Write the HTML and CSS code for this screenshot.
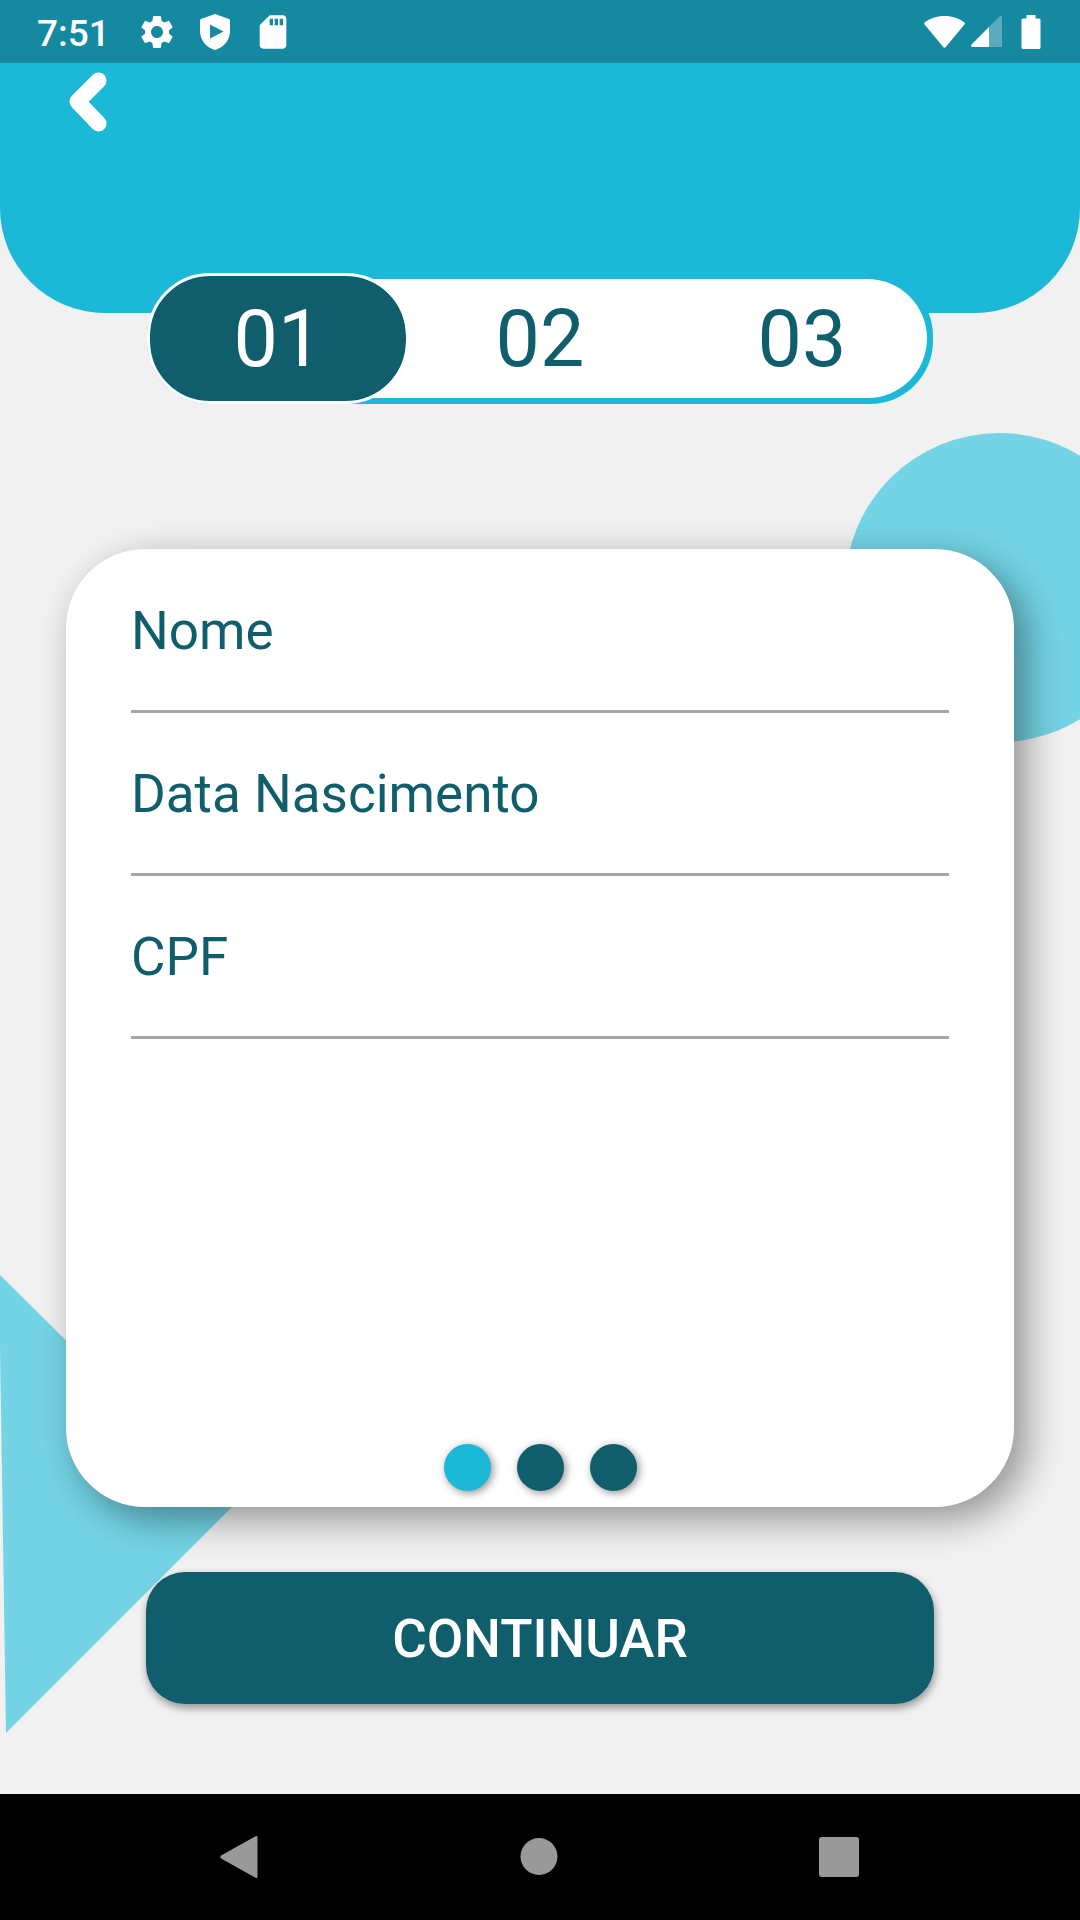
FILE: index.html
```html
<!DOCTYPE html>
<html lang="pt-BR">
<head>
<meta charset="utf-8">
<meta name="viewport" content="width=device-width, initial-scale=1">
<title>Cadastro</title>
<link rel="stylesheet" href="styles.css">
</head>
<body>
<div class="screen">
  <div class="status-bar">
    <span class="clock">7:51</span>
    <div class="notifications">
      <svg class="status-icon" viewBox="0 0 24 24" aria-hidden="true"><path d="M19.14 12.94c.04-.3.06-.61.06-.94 0-.32-.02-.64-.07-.94l2.03-1.58c.18-.14.23-.41.12-.61l-1.92-3.32c-.12-.22-.37-.29-.59-.22l-2.39.96c-.5-.38-1.03-.7-1.62-.94L14.4 2.81c-.04-.24-.24-.41-.48-.41h-3.84c-.24 0-.43.17-.47.41L9.25 5.35c-.59.24-1.13.57-1.62.94l-2.39-.96c-.22-.08-.47 0-.59.22L2.74 8.87c-.12.21-.08.47.12.61l2.03 1.58c-.05.3-.09.63-.09.94s.02.64.07.94l-2.03 1.58c-.18.14-.23.41-.12.61l1.92 3.32c.12.22.37.29.59.22l2.39-.96c.5.38 1.03.7 1.62.94l.36 2.54c.05.24.24.41.48.41h3.84c.24 0 .44-.17.47-.41l.36-2.54c.59-.24 1.13-.56 1.62-.94l2.39.96c.22.08.47 0 .59-.22l1.92-3.32c.12-.22.07-.47-.12-.61l-2.01-1.58zM12 15.6c-1.98 0-3.6-1.62-3.6-3.6s1.62-3.6 3.6-3.6 3.6 1.62 3.6 3.6-1.62 3.6-3.6 3.6z"/></svg>
      <svg class="status-icon" viewBox="0 0 40 40" aria-hidden="true"><path fill-rule="evenodd" d="M20 2 34 7Q35 7.500 35 8.500V19C35 28 29 35.500 20 38 11 35.500 5 28 5 19V8.500Q5 7.500 6 7ZM15 12.500V26.500L28.500 19.500Z"/></svg>
      <svg class="status-icon" viewBox="0 0 24 24" aria-hidden="true"><path d="M18 2h-8L4 8v12c0 1.100.9 2 2 2h12c1.100 0 2-.9 2-2V4c0-1.100-.9-2-2-2zm-6 6h-2V4h2v4zm3 0h-2V4h2v4zm3 0h-2V4h2v4z"/></svg>
    </div>
    <div class="indicators">
      <svg class="wifi-icon" viewBox="0 0 41 32" aria-hidden="true"><path d="M20.500 0C28.500 0 35.500 2.500 40.200 6.300Q41.200 7.300 40.400 8.600L22 30.800Q20.500 32.500 19 30.800L.6 8.600Q-.2 7.300.8 6.300C5.500 2.500 12.500 0 20.500 0Z"/></svg>
      <svg class="signal-icon" viewBox="0 0 31 31" aria-hidden="true"><path opacity=".3" d="M18 11 28.500.6Q31-.8 31 1.500V29.500Q31 31 29.500 31H18Z"/><path d="M18 11V31H1.500Q-.8 31 .5 28.500Z"/></svg>
      <svg class="battery-icon" viewBox="0 0 20 34" aria-hidden="true"><path d="M5.500 0h9v3.500H18q1.500 0 1.500 1.500v27.500q0 1.500-1.500 1.500H2Q.5 34 .5 32.500V5q0-1.500 1.500-1.500h3.500Z"/></svg>
    </div>
  </div>

  <header class="header">
    <button class="back" type="button" aria-label="Voltar">
      <svg class="back-icon" viewBox="0 0 38 60" aria-hidden="true"><path d="M29.500 8.500 8.500 29.500 29.500 51.500"/></svg>
    </button>
  </header>

  <main class="content">
    <div class="decor-circle"></div>
    <svg class="decor-triangle" viewBox="0 0 233 458" aria-hidden="true"><path d="M0 0 233 231 6 458 0 71Z"/></svg>

    <ol class="steps">
      <li class="step step-active" aria-current="step">01</li>
      <li class="step">02</li>
      <li class="step">03</li>
    </ol>

    <form class="form">
      <section class="card">
        <div class="field">
          <label class="field-label" for="nome">Nome</label>
          <input class="field-input" id="nome" type="text">
        </div>
        <div class="field">
          <label class="field-label" for="nascimento">Data Nascimento</label>
          <input class="field-input" id="nascimento" type="text">
        </div>
        <div class="field">
          <label class="field-label" for="cpf">CPF</label>
          <input class="field-input" id="cpf" type="text" inputmode="numeric">
        </div>
        <div class="dots">
          <span class="dot dot-current"></span>
          <span class="dot"></span>
          <span class="dot"></span>
        </div>
      </section>
      <button class="submit" type="submit">CONTINUAR</button>
    </form>
  </main>

  <nav class="nav-bar">
    <button class="nav-button" type="button" aria-label="Voltar do sistema">
      <svg class="nav-icon" viewBox="0 0 42 42" aria-hidden="true"><path d="M39.500 1.200V40.800Q39.500 42.500 37.500 41.700L3.500 22.800Q1 21 3.500 19.200L37.500.3Q39.500-.5 39.500 1.200Z"/></svg>
    </button>
    <button class="nav-button" type="button" aria-label="Tela inicial">
      <svg class="nav-icon" viewBox="0 0 42 42" aria-hidden="true"><circle cx="21" cy="20.500" r="18.500"/></svg>
    </button>
    <button class="nav-button" type="button" aria-label="Recentes">
      <svg class="nav-icon" viewBox="0 0 42 42" aria-hidden="true"><rect x="1" y="1" width="40" height="40" rx="3"/></svg>
    </button>
  </nav>
</div>
</body>
</html>
```
FILE: styles.css
```css
:root {
  --cyan: #1bb8d7;
  --cyan-dark: #1489a0;
  --cyan-light: #74d4e5;
  --teal: #105e6b;
  --page: #f1f1f1;
}

* {
  box-sizing: border-box;
}

body {
  margin: 0;
  background: var(--page);
  font-family: Roboto, sans-serif;
  color: var(--teal);
}

button {
  border: 0;
  padding: 0;
  background: none;
  font: inherit;
  cursor: pointer;
}

svg {
  display: block;
}

.screen {
  min-height: 100vh;
  display: flex;
  flex-direction: column;
  overflow-x: clip;
}

/* System status bar */
.status-bar {
  height: 63px;
  padding: 0 39px 0 37px;
  display: flex;
  align-items: center;
  background: var(--cyan-dark);
  color: #fff;
  fill: #fff;
}

.clock {
  font-size: 37px;
  font-weight: 500;
  line-height: 48px;
  padding-top: 4px;
}

.notifications {
  display: flex;
  gap: 18px;
  margin-left: 27px;
}

.status-icon {
  width: 40px;
  height: 40px;
}

.indicators {
  display: flex;
  align-items: center;
  margin-left: auto;
}

.wifi-icon {
  width: 41px;
  height: 32px;
}

.signal-icon {
  width: 31px;
  height: 31px;
  margin: 0 19px 0 6px;
}

.battery-icon {
  width: 20px;
  height: 34px;
}

/* Header */
.header {
  height: 250px;
  padding: 9px 69px;
  background: var(--cyan);
  border-radius: 0 0 105px 105px;
}

.back-icon {
  width: 38px;
  height: 60px;
  fill: none;
  stroke: #fff;
  stroke-width: 16px;
  stroke-linecap: round;
  stroke-linejoin: round;
}

/* Main area */
.content {
  position: relative;
  flex: 1;
  display: flex;
  flex-direction: column;
}

.decor-circle {
  position: absolute;
  top: 120px;
  right: -74px;
  width: 309px;
  height: 309px;
  border-radius: 50%;
  background: var(--cyan-light);
}

.decor-triangle {
  position: absolute;
  left: 0;
  bottom: 61px;
  width: 233px;
  height: 458px;
  fill: var(--cyan-light);
}

.steps {
  position: relative;
  display: grid;
  grid-template-columns: repeat(3, 1fr);
  height: 131px;
  margin: -40px 147px 0;
  padding: 0;
  list-style: none;
  border-radius: 63px;
  background: var(--cyan);
}

/* White face of the pill, leaving a cyan rim */
.steps::before {
  content: "";
  position: absolute;
  inset: 6px;
  border-radius: 60px;
  background: #fff;
}

.step {
  position: relative;
  display: flex;
  align-items: center;
  justify-content: center;
  font-size: 79px;
  line-height: 96px;
}

.step-active {
  border: 3px solid #fff;
  border-radius: 63px;
  background: var(--teal) padding-box;
  color: #fff;
}

.form {
  position: relative;
  flex: 1;
  display: flex;
  flex-direction: column;
  padding: 145px 66px 90px;
}

.card {
  flex: 1;
  display: flex;
  flex-direction: column;
  gap: 51px;
  padding: 52px 65px 16px;
  border-radius: 79px;
  background: #fff;
  box-shadow: 12px 12px 38px rgba(0, 0, 0, 0.4);
}

.field {
  display: flex;
  flex-direction: column;
}

.field-label {
  font-size: 53px;
  line-height: 61px;
}

.field-input {
  width: 100%;
  height: 51px;
  padding: 0;
  border: 0;
  border-bottom: 3px solid #a6a6a6;
  background: none;
  font: inherit;
  font-size: 37px;
  color: inherit;
  outline: none;
}

.dots {
  display: flex;
  justify-content: center;
  gap: 26px;
  margin-top: auto;
}

.dot {
  width: 47px;
  height: 47px;
  border-radius: 50%;
  background: var(--teal);
  box-shadow: 2px 2px 9px rgba(0, 0, 0, 0.45);
}

.dot-current {
  background: var(--cyan);
}

.submit {
  height: 132px;
  margin: 65px 80px 0;
  padding-top: 3px;
  border-radius: 39px;
  background: var(--teal);
  box-shadow: 1px 4px 8px rgba(0, 0, 0, 0.4);
  color: #fff;
  font-size: 53px;
  font-weight: 500;
  line-height: 61px;
}

/* System navigation bar */
.nav-bar {
  height: 126px;
  padding: 0 91px 0 89px;
  display: grid;
  grid-template-columns: repeat(3, 1fr);
  align-items: center;
  background: #000;
}

.nav-button {
  display: flex;
  justify-content: center;
}

.nav-icon {
  width: 42px;
  height: 42px;
  fill: #999;
}
```
